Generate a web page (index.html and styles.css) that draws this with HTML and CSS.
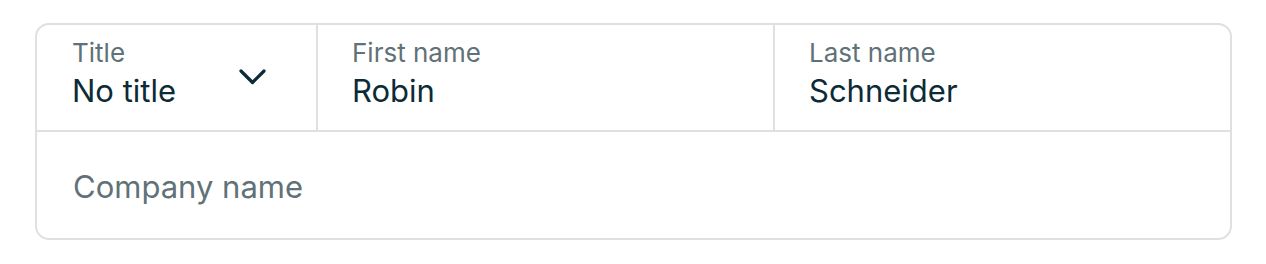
FILE: index.html
```html
<!DOCTYPE html>
<html lang="en">

<head>
  <meta charset="UTF-8">
  <meta name="viewport" content="width=device-width, initial-scale=1.0">
  <title>Contact form</title>
  <link rel="stylesheet" href="styles.css">
</head>

<body>
  <div class="formBox">
    <div class="row">
      <div class="field titleField">
        <div class="fieldText">
          <span class="label">Title</span>
          <span class="value">No title</span>
        </div>
        <svg class="chevron" width="27" height="16" viewBox="0 0 27 16">
          <path d="M2 2 L13.5 13.5 L25 2" fill="none" stroke="#0b2b36" stroke-width="3.2" stroke-linecap="round" stroke-linejoin="round" />
        </svg>
      </div>
      <div class="field">
        <div class="fieldText">
          <span class="label">First name</span>
          <span class="value">Robin</span>
        </div>
      </div>
      <div class="field">
        <div class="fieldText">
          <span class="label">Last name</span>
          <span class="value">Schneider</span>
        </div>
      </div>
    </div>
    <div class="row bottomRow">
      <span class="placeholder">Company name</span>
    </div>
  </div>
</body>

</html>
```
FILE: styles.css
```css
body {
  margin: 0;
  padding: 23px 34px 24px 35px;
  font-family: Inter, "Noto Sans", sans-serif;
  background-color: #fff;
}

.formBox {
  border: 2px solid #e0e0e0;
  border-radius: 14px;
  overflow: hidden;
}

.row {
  display: flex;
  height: 105px;
}

.field {
  flex: 1;
  display: flex;
  align-items: flex-start;
  padding: 12px 34px 0;
  border-left: 2px solid #e0e0e0;
}

.titleField {
  flex: 0 0 279px;
  box-sizing: border-box;
  border-left: none;
  padding: 12px 12px 0 35px;
  justify-content: space-between;
}

.fieldText {
  display: flex;
  flex-direction: column;
}

.label {
  font-size: 26px;
  line-height: 32px;
  color: #5f7278;
}

.value {
  font-size: 31px;
  line-height: 43px;
  color: #0b2b36;
}

.chevron {
  display: block;
  margin: 32px 38px 0 0;
}

.bottomRow {
  border-top: 2px solid #e0e0e0;
  align-items: center;
  height: 108px;
  padding: 2px 36px 0;
  box-sizing: border-box;
}

.placeholder {
  font-size: 31px;
  color: #5f7278;
}
```
